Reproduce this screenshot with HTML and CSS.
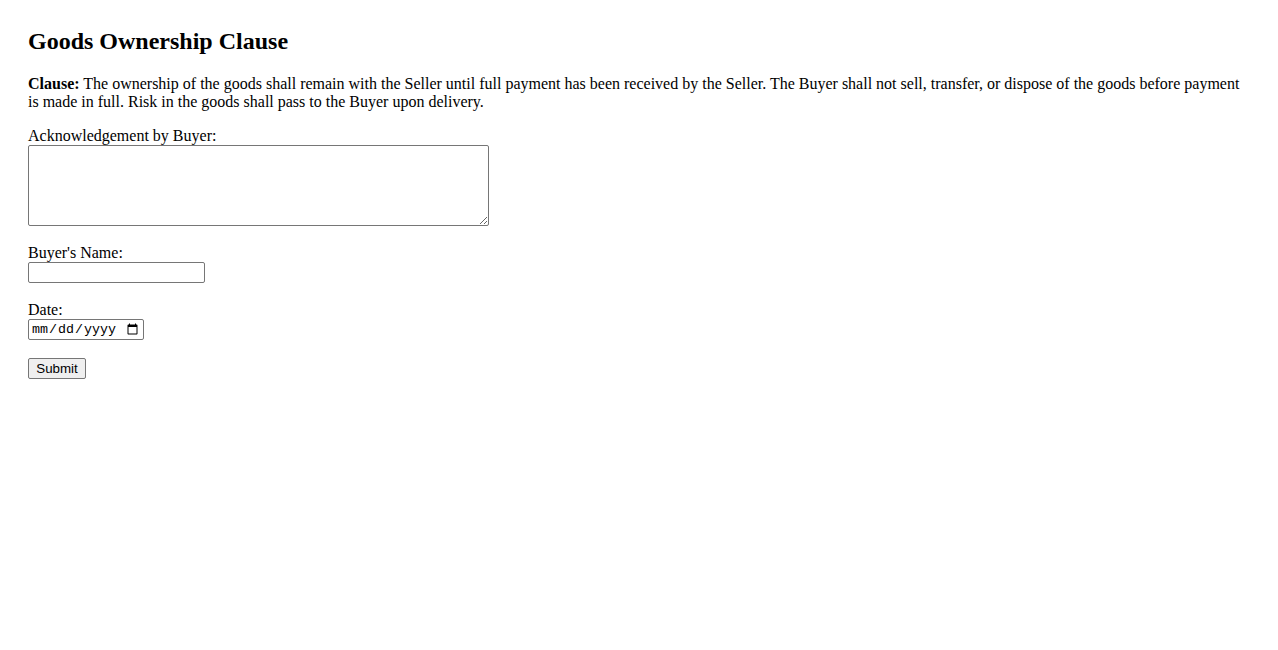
FILE: index.html
```html
<!DOCTYPE html>
<html lang="en">
<head>
    <meta charset="UTF-8">
    <meta name="viewport" content="width=device-width, initial-scale=1.0">
    <title>Goods Ownership Clause</title>
    <link rel="stylesheet" href="styles.css">
</head>
<body>
    <div class="container">
        <h2>Goods Ownership Clause</h2>
        <p><strong>Clause:</strong> The ownership of the goods shall remain with the Seller until full payment has been received by the Seller. The Buyer shall not sell, transfer, or dispose of the goods before payment is made in full. Risk in the goods shall pass to the Buyer upon delivery.</p>
        <form>
            <div class="field">
                <label for="acknowledgement">Acknowledgement by Buyer:</label>
                <textarea id="acknowledgement" name="acknowledgement" rows="5"></textarea>
            </div>
            <div class="field">
                <label for="buyerName">Buyer's Name:</label>
                <input type="text" id="buyerName" name="buyerName" class="text-input">
            </div>
            <div class="field">
                <label for="date">Date:</label>
                <input type="date" id="date" name="date" class="date-input">
            </div>
            <button type="submit">Submit</button>
        </form>
    </div>
</body>
</html>
```

FILE: styles.css
```css
body {
    font-family: "Liberation Serif", "Times New Roman", serif;
    font-size: 16px;
    color: #000;
    margin: 8px;
}
.container {
    padding: 20px;
}
h2 {
    font-size: 24px;
    margin: 0 0 20px;
}
p {
    margin: 0 0 16px;
    line-height: 18px;
}
label {
    display: block;
    line-height: 18px;
}
.field {
    margin-bottom: 18px;
}
textarea {
    display: block;
    width: 461px;
    height: 81px;
    box-sizing: border-box;
    border: 1px solid #767676;
    border-radius: 2px;
    margin: 0;
}
input {
    display: block;
    height: 21px;
    box-sizing: border-box;
    border: 1px solid #767676;
    border-radius: 2px;
    margin: 0;
    padding: 1px 2px;
    font-size: 13.33px;
}
.text-input {
    width: 177px;
}
.date-input {
    width: 116px;
    font-family: "Liberation Mono", monospace;
}
button {
    height: 21px;
    width: 58px;
    padding: 1px 6px;
    font-family: "Liberation Sans", Arial, sans-serif;
    font-size: 13.33px;
    background-color: #efefef;
    border: 1px solid #767676;
    border-radius: 2px;
    margin: 0;
}
```
